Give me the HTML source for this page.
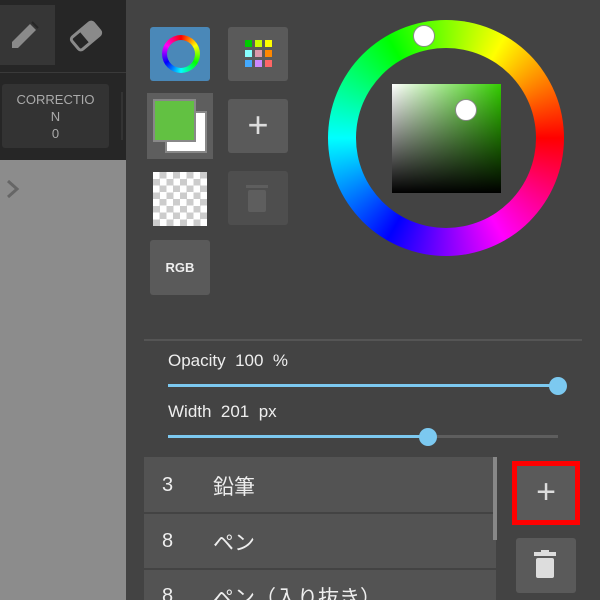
<!DOCTYPE html><html><head><style>
html,body{margin:0;width:600px;height:600px;overflow:hidden}
body{background:#434343;font-family:"Liberation Sans","Noto Sans CJK JP",sans-serif;position:relative}
div{position:absolute;box-sizing:border-box}
.btn{background:#5a5a5a;border-radius:3px}
</style></head><body>
<div style="left:0;top:0;width:126px;height:160px;background:#262626"></div>
<div style="left:0;top:160px;width:126px;height:440px;background:#8c8c8c"></div>
<div style="left:0;top:5px;width:55px;height:60px;background:#363636"></div>
<svg style="position:absolute;left:8px;top:20px" width="36" height="32" viewBox="0 0 36 32"><path d="M4 28 L4 22 L22 4 L28 10 L10 28 Z" fill="#8a8a8a"/><path d="M24 2 L30 8" stroke="#262626" stroke-width="2"/></svg>
<svg style="position:absolute;left:68px;top:20px" width="36" height="32" viewBox="0 0 36 32"><g transform="rotate(-40 18 16)"><rect x="4" y="8" width="28" height="16" rx="3" fill="none" stroke="#8a8a8a" stroke-width="3"/><rect x="16" y="8" width="16" height="16" rx="2" fill="#8a8a8a"/></g></svg>
<div style="left:0;top:72px;width:126px;height:1px;background:#3a3a3a"></div>
<div style="left:2px;top:84px;width:107px;height:64px;background:#333;border-radius:3px;color:#aaa;font-size:13px;text-align:center;line-height:17px;padding-top:7px">CORRECTIO<br>N<br>0</div>
<div style="left:121px;top:92px;width:2px;height:48px;background:#333"></div>
<svg style="position:absolute;left:5px;top:178px" width="16" height="22"><path d="M3 3 L12 11 L3 19" fill="none" stroke="#666" stroke-width="3"/></svg>

<div style="left:150px;top:27px;width:60px;height:54px;background:#4a88b8;border-radius:3px"></div>
<div style="left:162px;top:35px;width:38px;height:38px;border-radius:50%;background:conic-gradient(red,#ff0,lime,cyan,blue,#f0f,red)"></div>
<div style="left:167px;top:40px;width:28px;height:28px;border-radius:50%;background:#4a88b8"></div>
<div class="btn" style="left:228px;top:27px;width:60px;height:54px"></div>
<svg style="position:absolute;left:245px;top:40px" width="28" height="28"><rect x="0" y="0" width="7" height="7" fill="#0c0"/><rect x="10" y="0" width="7" height="7" fill="#cf0"/><rect x="20" y="0" width="7" height="7" fill="#ff0"/><rect x="0" y="10" width="7" height="7" fill="#8ff"/><rect x="10" y="10" width="7" height="7" fill="#d9a"/><rect x="20" y="10" width="7" height="7" fill="#f80"/><rect x="0" y="20" width="7" height="7" fill="#4af"/><rect x="10" y="20" width="7" height="7" fill="#c8f"/><rect x="20" y="20" width="7" height="7" fill="#f66"/></svg>
<div style="left:147px;top:93px;width:66px;height:66px;background:#5e5e5e"></div>
<div style="left:165px;top:111px;width:42px;height:42px;background:#fff;border:2px solid #888"></div>
<div style="left:153px;top:99px;width:43px;height:43px;background:#62c142;border:2px solid #888"></div>
<div class="btn" style="left:228px;top:99px;width:60px;height:54px;color:#ddd;font-size:36px;text-align:center;line-height:52px">+</div>
<div style="left:153px;top:172px;width:54px;height:54px;background:repeating-conic-gradient(#ccc 0 25%,#fff 0 50%) 0 0/13.5px 13.5px"></div>
<div class="btn" style="left:228px;top:171px;width:60px;height:54px;background:#4e4e4e"></div>
<svg style="position:absolute;left:246px;top:185px" width="24" height="28"><rect x="0" y="0" width="22" height="3" fill="#5e5e5e"/><rect x="2" y="5" width="18" height="22" rx="2" fill="#5e5e5e"/></svg>
<div class="btn" style="left:150px;top:240px;width:60px;height:55px;color:#eee;font-weight:bold;font-size:13px;text-align:center;line-height:55px">RGB</div>

<div style="left:328px;top:20px;width:236px;height:236px;border-radius:50%;background:conic-gradient(#80ff00,#ff0 30deg,#ff8000 60deg,red 90deg,#ff0080 120deg,#f0f 150deg,#8000ff 180deg,blue 210deg,#0080ff 240deg,cyan 270deg,#00ff80 300deg,lime 330deg,#80ff00 360deg)"></div>
<div style="left:356px;top:48px;width:180px;height:180px;border-radius:50%;background:#434343"></div>
<div style="left:392px;top:84px;width:109px;height:109px;background:linear-gradient(to top,#000,transparent),linear-gradient(to right,#fff,#3c0)"></div>
<div style="left:413px;top:25px;width:22px;height:22px;border-radius:50%;background:#fff;border:1px solid #888"></div>
<div style="left:455px;top:99px;width:22px;height:22px;border-radius:50%;background:#fff;border:1px solid #888"></div>

<div style="left:144px;top:339px;width:438px;height:2px;background:#555"></div>
<div style="left:168px;top:351px;color:#eee;font-size:17px">Opacity&nbsp; 100&nbsp; %</div>
<div style="left:168px;top:384px;width:390px;height:3px;background:#7cc9f0"></div>
<div style="left:549px;top:377px;width:18px;height:18px;border-radius:50%;background:#7cc9f0"></div>
<div style="left:168px;top:402px;color:#eee;font-size:17px">Width&nbsp; 201&nbsp; px</div>
<div style="left:168px;top:435px;width:390px;height:3px;background:#5e5e5e"></div>
<div style="left:168px;top:435px;width:260px;height:3px;background:#7cc9f0"></div>
<div style="left:419px;top:428px;width:18px;height:18px;border-radius:50%;background:#7cc9f0"></div>

<div style="left:144px;top:457px;width:352px;height:55px;background:#535353"></div>
<div style="left:144px;top:514px;width:352px;height:54px;background:#535353"></div>
<div style="left:144px;top:570px;width:352px;height:30px;background:#535353;overflow:hidden"></div>
<div style="left:493px;top:457px;width:4px;height:83px;background:#888"></div>
<div style="left:162px;top:474px;color:#eee;font-size:20px">3</div><div style="left:213px;top:471px;color:#eee;font-size:21px">鉛筆</div>
<div style="left:162px;top:530px;color:#eee;font-size:20px">8</div><div style="left:213px;top:527px;color:#eee;font-size:21px">ペン</div>
<div style="left:162px;top:585px;color:#eee;font-size:20px">8</div><div style="left:213px;top:582px;color:#eee;font-size:21px">ペン（入り抜き）</div>
<div style="left:512px;top:461px;width:68px;height:64px;border:5px solid #f00;background:#5a5a5a;color:#ddd;font-size:34px;text-align:center;line-height:52px">+</div>
<div class="btn" style="left:516px;top:538px;width:60px;height:55px"></div>
<svg style="position:absolute;left:534px;top:550px" width="24" height="30"><rect x="0" y="2" width="22" height="4" fill="#ddd"/><rect x="7" y="0" width="8" height="3" fill="#ddd"/><rect x="2" y="8" width="18" height="20" rx="2" fill="#ddd"/></svg>
</body></html>
